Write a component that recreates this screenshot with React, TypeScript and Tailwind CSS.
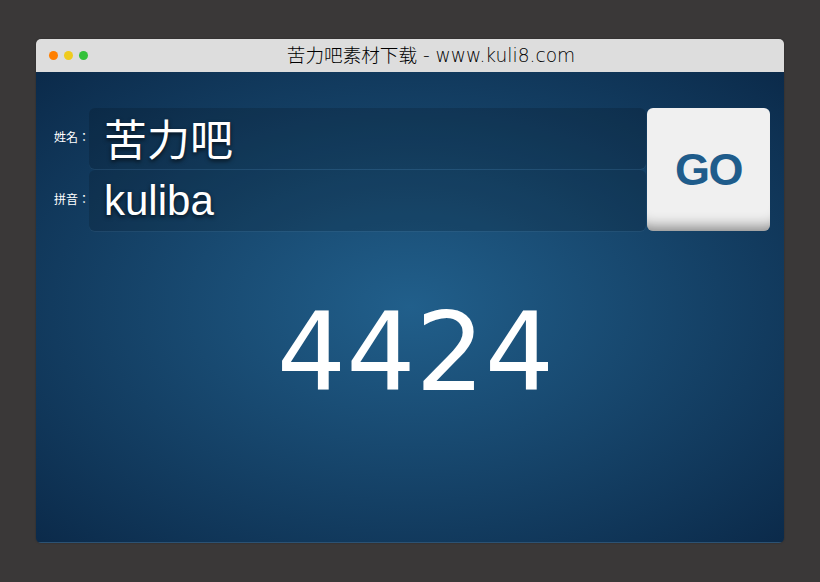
export default function App() {
  return (
    <div className="w-[820px] h-[582px] bg-[#3a3838] pt-[39px] pl-9 overflow-hidden">
      <div className="w-[748px] h-[504px] rounded-[5px] overflow-hidden flex flex-col shadow-[0_0_2px_rgba(0,0,0,0.3)]">
        <div className="h-[33px] shrink-0 bg-[#dddddd] flex items-center relative">
          <div className="absolute left-[13px] top-[12px] flex gap-[6px]">
            <span className="w-[9px] h-[9px] rounded-full bg-[#ff7f00]" />
            <span className="w-[9px] h-[9px] rounded-full bg-[#efcb1e]" />
            <span className="w-[9px] h-[9px] rounded-full bg-[#33c13a]" />
          </div>
          <div className="w-full text-center text-[18.6px] font-extralight text-black font-['DejaVu_Sans','Noto_Sans_CJK_SC',sans-serif] leading-[33px] pl-[42px] whitespace-nowrap">
            苦力吧素材下载 - www.kuli8.com
          </div>
        </div>
        <div className="flex-1 border-b border-[#2c5273] bg-[radial-gradient(ellipse_at_center,#215f8b_0%,#0b2a4a_100%)] flex flex-col">
          <div className="flex pt-9 pl-[18px] pr-[14px]">
            <div className="flex-1 flex flex-col gap-px">
              <div className="flex items-center h-[61px]">
                <label className="w-[35px] shrink-0 pb-[1px] text-[12px] text-white whitespace-nowrap font-['Liberation_Sans','Noto_Sans_CJK_TC',sans-serif]">姓名：</label>
                <div className="flex-1 h-full rounded-[6px] bg-black/15 shadow-[0_1px_0_rgba(255,255,255,0.05)] pl-[15px] text-[43px] leading-[66px] text-white [text-shadow:0_2px_4px_rgba(0,0,0,0.7)] font-['Liberation_Sans','Noto_Sans_CJK_SC',sans-serif]">苦力吧</div>
              </div>
              <div className="flex items-center h-[61px]">
                <label className="w-[35px] shrink-0 pb-[1px] text-[12px] text-white whitespace-nowrap font-['Liberation_Sans','Noto_Sans_CJK_TC',sans-serif]">拼音：</label>
                <div className="flex-1 h-full rounded-[6px] bg-black/15 shadow-[0_1px_0_rgba(255,255,255,0.05)] pl-[15px] text-[42px] leading-[62px] text-white [text-shadow:0_2px_4px_rgba(0,0,0,0.7)] font-['Liberation_Sans','Noto_Sans_CJK_SC',sans-serif]">kuliba</div>
              </div>
            </div>
            <button className="w-[123px] h-[123px] ml-px rounded-[6px] bg-[#f0f0f0] shadow-[inset_0_-18px_14px_-14px_rgba(0,0,0,0.45)] text-[45px] tracking-[-1.5px] font-bold text-[#1f5c8b] font-['Liberation_Sans',sans-serif]">GO</button>
          </div>
          <div className="text-center text-[109px] leading-[130px] mt-[57px] pl-[11px] text-white font-['DejaVu_Sans',sans-serif]">4424</div>
        </div>
      </div>
    </div>
  )
}
